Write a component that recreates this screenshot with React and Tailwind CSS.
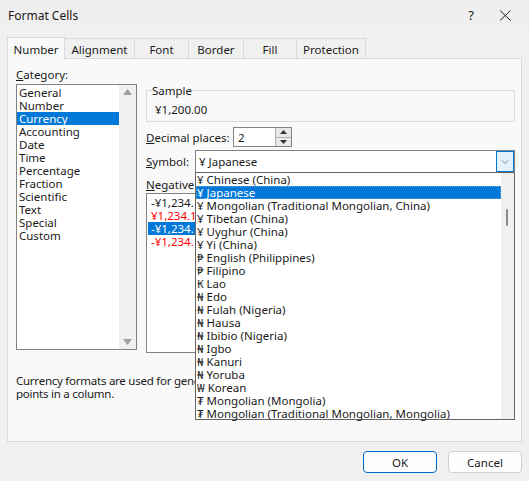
import { ChevronDown } from 'lucide-react';

const categories = ['General', 'Number', 'Currency', 'Accounting', 'Date', 'Time', 'Percentage', 'Fraction', 'Scientific', 'Text', 'Special', 'Custom'];

const symbols = [
  ['¥', 'Chinese (China)'],
  ['¥', 'Japanese'],
  ['¥', 'Mongolian (Traditional Mongolian, China)'],
  ['¥', 'Tibetan (China)'],
  ['¥', 'Uyghur (China)'],
  ['¥', 'Yi (China)'],
  ['₱', 'English (Philippines)'],
  ['₱', 'Filipino'],
  ['₭', 'Lao'],
  ['₦', 'Edo'],
  ['₦', 'Fulah (Nigeria)'],
  ['₦', 'Hausa'],
  ['₦', 'Ibibio (Nigeria)'],
  ['₦', 'Igbo'],
  ['₦', 'Kanuri'],
  ['₦', 'Yoruba'],
  ['₩', 'Korean'],
  ['₮', 'Mongolian (Mongolia)'],
  ['₮', 'Mongolian (Traditional Mongolian, Mongolia)'],
];

const negatives = [
  { text: '-¥1,234.10', red: false },
  { text: '¥1,234.10', red: true },
  { text: '-¥1,234.10', red: false, sel: true },
  { text: '-¥1,234.10', red: true },
];

const tabs = [
  { name: 'Number', w: 'w-[58px]' },
  { name: 'Alignment', w: 'w-[70px]' },
  { name: 'Font', w: 'w-[54px]' },
  { name: 'Border', w: 'w-[55px]' },
  { name: 'Fill', w: 'w-[53px]' },
  { name: 'Protection', w: 'w-[69px]' },
];

export default function App() {
  return (
    <div className="relative w-[529px] h-[481px] overflow-hidden bg-[#f0f0f0] text-[11.5px] leading-[13px] text-[#1a1a1a] font-['Noto_Sans',sans-serif]">
      {/* title bar */}
      <div className="h-[30px] flex items-center pl-[8px] bg-[#efefef]">
        <span className="flex-1 text-[12px]">Format Cells</span>
        <span className="w-[46px] text-center text-[13px]">?</span>
        <svg className="mr-[16px] ml-[4px]" width="15" height="11" viewBox="0 0 15 11">
          <path d="M2 0.5 L12.5 10.5 M12.5 0.5 L2 10.5" stroke="#222" strokeWidth="1" fill="none" />
        </svg>
      </div>

      {/* tabs */}
      <div className="flex items-end h-[28px] pl-[7px]">
        {tabs.map((t, i) => (
          <div
            key={t.name}
            className={`${t.w} flex items-center justify-center border-t border-r border-[#d9d9d9] ${i === 0 ? 'h-[22px] border-l bg-[#f9f9f9] -mb-px relative z-10 pt-[1px]' : 'h-[20px] bg-[#f0f0f0] pt-[2px]'}`}
          >
            {t.name}
          </div>
        ))}
      </div>

      {/* panel */}
      <div className="ml-[7px] w-[515px] h-[384px] border border-[#d9d9d9] bg-[#f9f9f9] pl-[8px] pt-[9px]">
        <div className="flex">
          <div className="w-[121px]">
            <div className="h-[16px]"><span className="underline">C</span>ategory:</div>
            <div className="h-[266px] border border-[#828282] bg-white flex">
              <div className="flex-1 pt-px">
                {categories.map((c) => (
                  <div key={c} className={`h-[13px] pl-[2px] ${c === 'Currency' ? 'bg-[#0078d7] text-white' : ''}`}>{c}</div>
                ))}
              </div>
              <div className="w-[17px] bg-[#f0f0f0] flex flex-col justify-between items-center py-[4px]">
                <svg width="9" height="6" viewBox="0 0 9 6"><path d="M0 6 L4.5 0 L9 6 Z" fill="#a0a0a0" /></svg>
                <svg width="9" height="6" viewBox="0 0 9 6"><path d="M0 0 L4.5 6 L9 0 Z" fill="#a0a0a0" /></svg>
              </div>
            </div>
          </div>

          <div className="ml-[9px] w-[369px] mt-[16px]">
            <fieldset className="h-[38px] border border-[#d9d9d9] pl-[8px] pt-[6px]">
              <legend className="px-0 -ml-[3px]">Sample</legend>
              <div>¥1,200.00</div>
            </fieldset>

            <div className="flex items-center mt-[5px] h-[20px]">
              <span className="w-[87px] whitespace-nowrap"><span className="underline">D</span>ecimal places:</span>
              <div className="w-[59px] h-[20px] border border-[#828282] bg-white flex">
                <span className="flex-1 pl-[4px] pt-[3px]">2</span>
                <div className="w-[16px] flex flex-col border-l border-[#b0b0b0]">
                  <div className="flex-1 flex items-center justify-center bg-[#e9e9e9] border-b border-[#b0b0b0]">
                    <svg width="7" height="4" viewBox="0 0 7 4"><path d="M0 4 L3.5 0 L7 4 Z" fill="#333" /></svg>
                  </div>
                  <div className="flex-1 flex items-center justify-center bg-[#e9e9e9]">
                    <svg width="7" height="4" viewBox="0 0 7 4"><path d="M0 0 L3.5 4 L7 0 Z" fill="#333" /></svg>
                  </div>
                </div>
              </div>
            </div>

            <div className="flex items-center mt-[3px] h-[23px]">
              <span className="w-[49px]"><span className="underline">S</span>ymbol:</span>
              <div className="flex-1 h-[23px] border border-[#828282] bg-white flex items-center">
                <span className="flex-1 pl-[3px]">¥ Japanese</span>
                <div className="w-[18px] h-[21px] border border-[#0078d7] bg-[#e5f1fb] flex items-center justify-center">
                  <ChevronDown size={12} strokeWidth={1.3} color="#444" />
                </div>
              </div>
            </div>

            <div className="mt-[5px] h-[13px] whitespace-nowrap"><span className="underline">N</span>egative numbers:</div>
            <div className="mt-[2px] h-[160px] w-[250px] border border-[#828282] bg-white pt-[2px] pl-[1px]">
              {negatives.map((n, i) => (
                <div key={i} className={`h-[13px] pl-[3px] ${n.sel ? 'bg-[#0078d7] text-white' : n.red ? 'text-[#ff0000]' : ''}`}>{n.text}</div>
              ))}
            </div>
          </div>
        </div>

        <div className="mt-[21px] w-[496px] overflow-hidden whitespace-nowrap leading-[13px] tracking-[-0.25px]">
          Currency formats are used for general monetary values. Use Accounting formats to align decimal
          <br />
          points in a column.
        </div>
      </div>

      {/* buttons */}
      <div className="flex justify-end gap-[11px] pr-[7px] mt-[9px]">
        <button className="w-[74px] h-[22px] rounded-[4px] border border-[#0067c0] bg-[#fdfdfd] leading-[13px]">OK</button>
        <button className="w-[74px] h-[22px] rounded-[4px] border border-[#d0d0d0] bg-[#fdfdfd] leading-[13px]">Cancel</button>
      </div>

      {/* open symbol dropdown */}
      <div className="absolute left-[195px] top-[172px] w-[320px] h-[248px] border border-[#646464] bg-white flex z-20">
        <div className="flex-1">
          {symbols.map(([s, name], i) => (
            <div
              key={name}
              className={`h-[13px] whitespace-nowrap pl-[1px] ${i === 1 ? 'bg-[#0078d7] text-white outline-1 outline-dotted outline-[#6aa9e8] -outline-offset-1' : ''}`}
            >
              {s} {name}
            </div>
          ))}
        </div>
        <div className="w-[13px] bg-[#f0f0f0] relative">
          <div className="absolute left-[5px] top-[36px] w-[2px] h-[17px] bg-[#8a8a8a] rounded-full" />
        </div>
      </div>
    </div>
  );
}
